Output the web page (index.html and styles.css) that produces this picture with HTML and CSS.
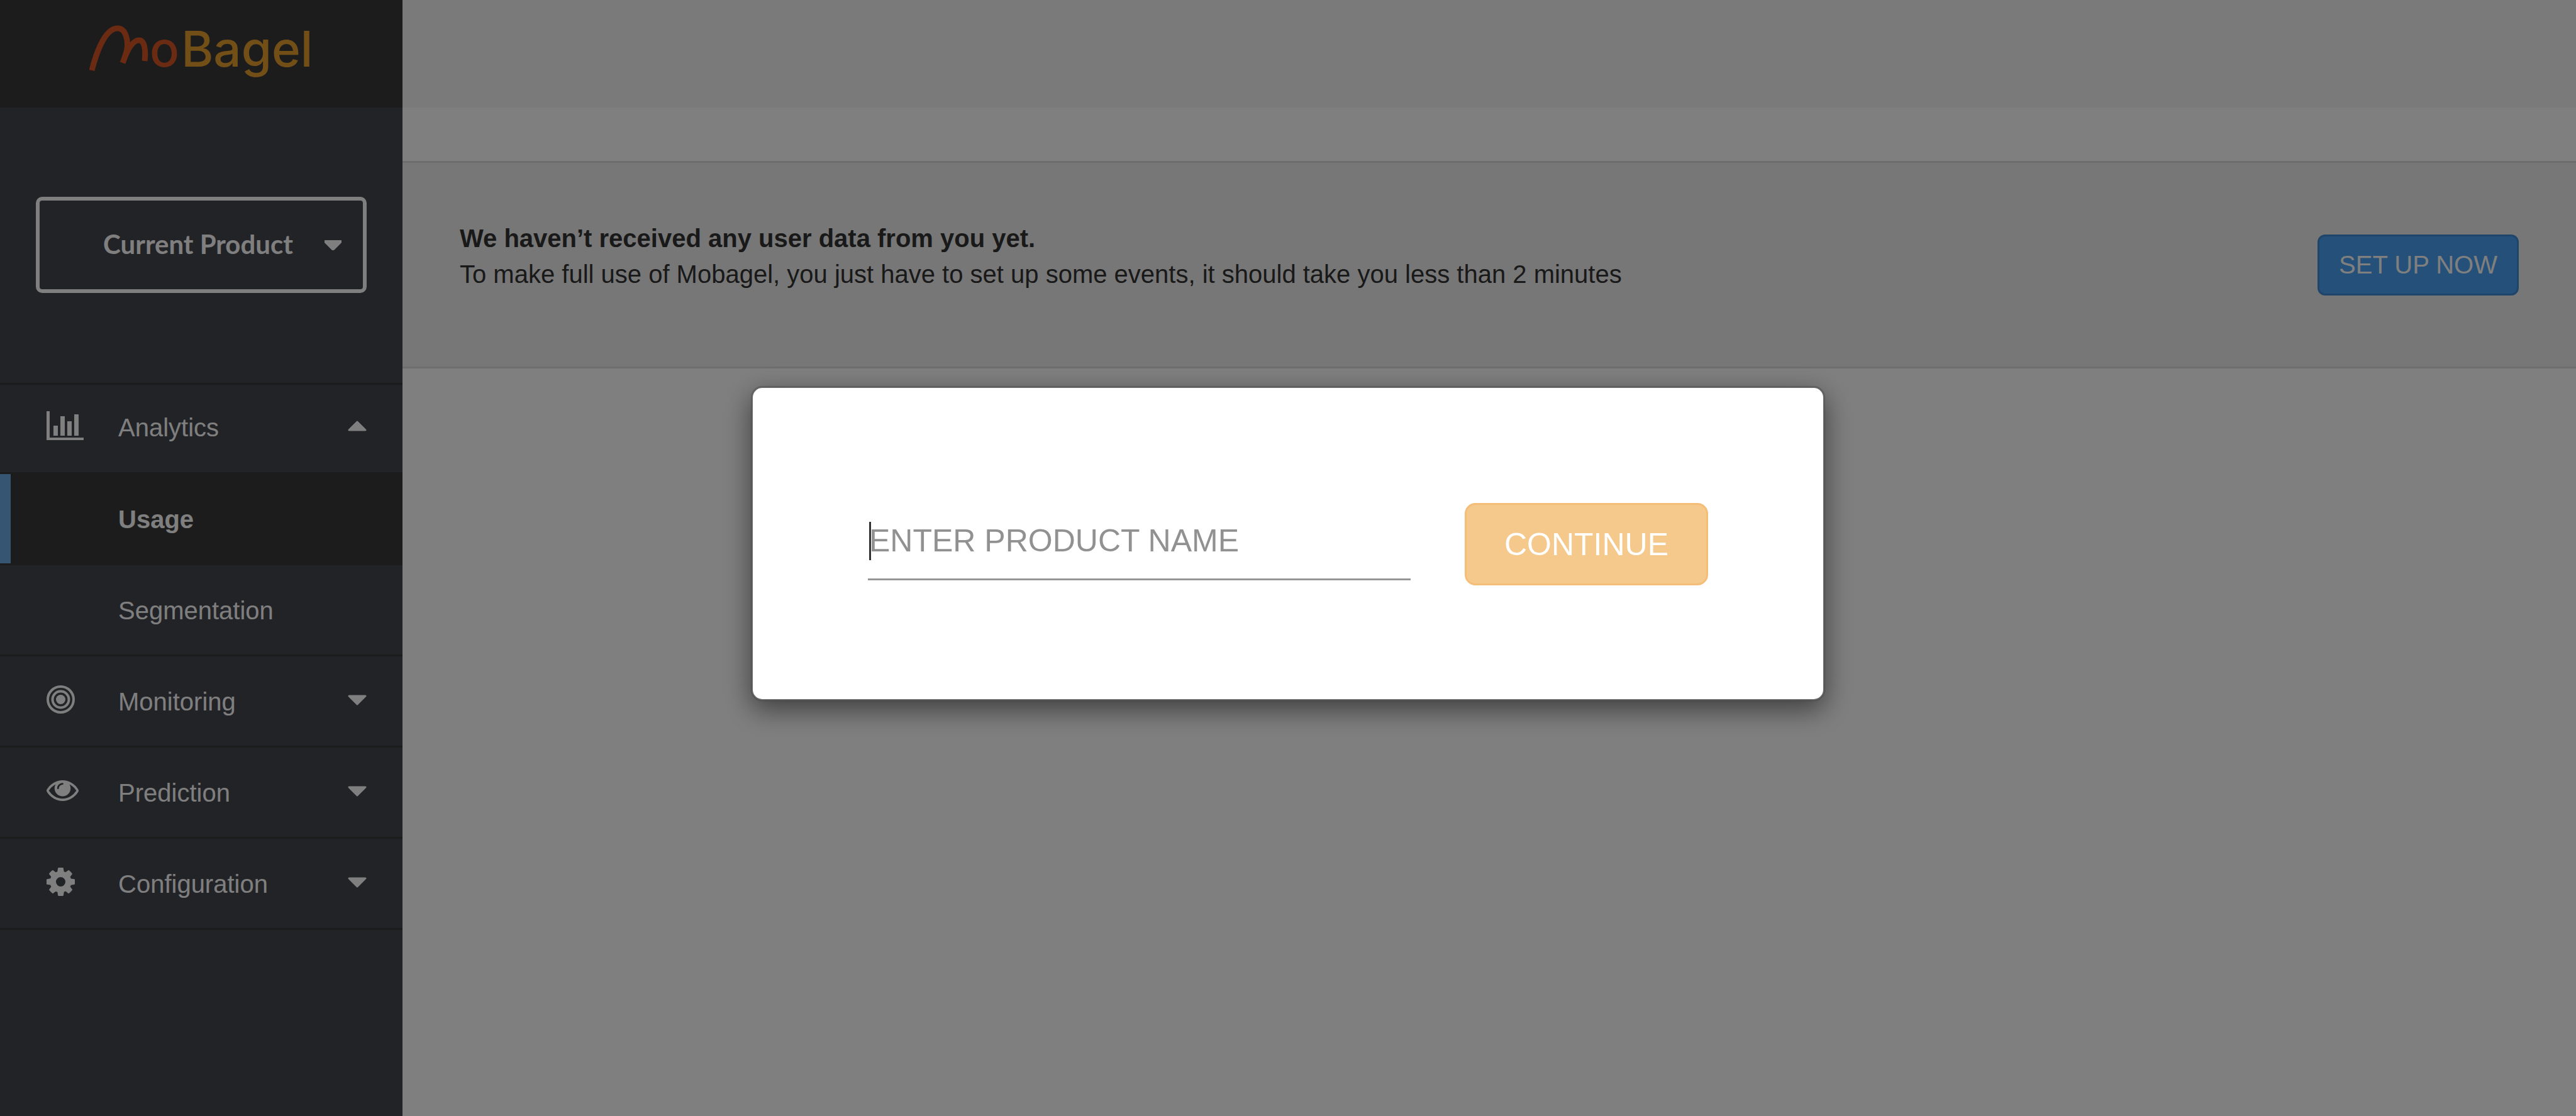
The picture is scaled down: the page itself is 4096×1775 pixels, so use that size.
FILE: index.html
```html
<!DOCTYPE html>
<html lang="en">
<head>
<meta charset="utf-8">
<title>MoBagel</title>
<link rel="stylesheet" href="styles.css">
</head>
<body>
<div class="app">
  <aside class="sidebar">
    <a class="brand" href="#" aria-label="MoBagel">
      <svg class="brand-mark" viewBox="0 0 94 74" aria-hidden="true">
        <path d="M4 72C9 52 23 5 45 5C58 5 62 24 60 38C58 48 55 55 53 60M53 60C58 46 67 24 79 24C88 24 90 40 88 57" fill="none" stroke="currentColor" stroke-width="9"/>
      </svg>
      <span class="brand-text"><span class="brand-o">o</span><span>Bagel</span></span>
    </a>
    <div class="product">
      <select class="product-select" aria-label="Product"><option>Current Product</option></select>
      <svg class="product-caret" viewBox="0 0 27 16" aria-hidden="true"><path d="M0 0H27V4L15 16H12L0 4Z"/></svg>
    </div>
    <nav class="nav">
      <a class="nav-item nav-item-first" href="#">
        <svg class="nav-icon" viewBox="0 0 59 46" width="59" height="46" aria-hidden="true"><path d="M0 0H5V42H59V46H0ZM11 23H18V39H11ZM22 8H29V39H22ZM33 16H40V39H33ZM44 5H51V39H44Z"/></svg>
        <span class="nav-label">Analytics</span>
        <svg class="nav-caret" viewBox="0 0 30 17" aria-hidden="true"><path d="M15 2L28 15H2Z"/></svg>
      </a>
      <a class="nav-item nav-item-active" href="#"><span class="nav-label">Usage</span></a>
      <a class="nav-item" href="#"><span class="nav-label">Segmentation</span></a>
      <a class="nav-item" href="#">
        <svg class="nav-icon" viewBox="0 0 45 45" width="45" height="45" aria-hidden="true"><g fill="none" stroke="currentColor" stroke-width="4"><circle cx="22.500" cy="22.500" r="20.500"/><circle cx="22.500" cy="22.500" r="13"/></g><circle cx="22.500" cy="22.500" r="7.500"/></svg>
        <span class="nav-label">Monitoring</span>
        <svg class="nav-caret" viewBox="0 0 30 17" aria-hidden="true"><path d="M15 15L28 2H2Z"/></svg>
      </a>
      <a class="nav-item" href="#">
        <svg class="nav-icon" viewBox="0 384 1792 1152" width="51" height="33" aria-hidden="true"><path d="M1664 960q-152-236-381-353 61 104 61 225 0 185-131.500 316.500t-316.500 131.500-316.500-131.500-131.500-316.500q0-121 61-225-229 117-381 353 133 205 333.500 326.500t434.500 121.500 434.500-121.500 333.500-326.500zm-720-384q0-20-14-34t-34-14q-125 0-214.500 89.500t-89.500 214.500q0 20 14 34t34 14 34-14 14-34q0-86 61-147t147-61q20 0 34-14t14-34zm848 384q0 34-20 69-140 230-376.500 368.500t-499.500 138.500-499.500-139-376.500-368q-20-35-20-69t20-69q140-229 376.500-368t499.500-139 499.500 139 376.500 368q20 35 20 69z"/></svg>
        <span class="nav-label">Prediction</span>
        <svg class="nav-caret" viewBox="0 0 30 17" aria-hidden="true"><path d="M15 15L28 2H2Z"/></svg>
      </a>
      <a class="nav-item" href="#">
        <svg class="nav-icon" viewBox="128 128 1536 1536" width="45" height="45" aria-hidden="true"><path d="M1152 896q0-106-75-181t-181-75-181 75-75 181 75 181 181 75 181-75 75-181zm512-109v222q0 12-8 23t-20 13l-185 28q-19 54-39 91 35 50 107 138 10 12 10 25t-9 23q-27 37-99 108t-94 71q-12 0-26-9l-138-108q-44 23-91 38-16 136-29 186-7 28-36 28h-222q-14 0-24.500-8.500t-11.500-21.500l-28-184q-49-16-90-37l-141 107q-10 9-25 9-14 0-25-11-126-114-165-168-7-10-7-23 0-12 8-23 15-21 51-66.500t54-70.500q-27-50-41-99l-183-27q-13-2-21-12.500t-8-23.500v-222q0-12 8-23t19-13l186-28q14-46 39-92-40-57-107-138-10-12-10-24 0-10 9-23 26-36 98.500-107.500t94.500-71.500q13 0 26 10l138 107q44-23 91-38 16-136 29-186 7-28 36-28h222q14 0 24.500 8.500t11.500 21.500l28 184q49 16 90 37l142-107q9-9 24-9 13 0 25 10 129 119 165 170 7 8 7 22 0 12-8 23-15 21-51 66.500t-54 70.500q26 50 41 98l183 28q13 2 21 12.500t8 23.500z"/></svg>
        <span class="nav-label">Configuration</span>
        <svg class="nav-caret" viewBox="0 0 30 17" aria-hidden="true"><path d="M15 15L28 2H2Z"/></svg>
      </a>
    </nav>
  </aside>
  <main class="main">
    <header class="topbar"></header>
    <section class="banner">
      <p class="banner-text"><strong>We haven’t received any user data from you yet.</strong><br>To make full use of Mobagel, you just have to set up some events, it should take you less than 2 minutes</p>
      <button class="btn btn-primary" type="button">SET UP NOW</button>
    </section>
  </main>
</div>
<div class="overlay">
  <form class="modal" role="dialog" aria-label="New product">
    <div class="field">
      <input class="field-input" type="text" placeholder="ENTER PRODUCT NAME" aria-label="Product name">
      <span class="field-cursor"></span>
    </div>
    <button class="btn btn-continue" type="button">CONTINUE</button>
  </form>
</div>
</body>
</html>
```
FILE: styles.css
```css
* {
  box-sizing: border-box;
}

body {
  margin: 0;
  background: #fff;
  color: #333;
  font-family: "Liberation Sans", Arial, sans-serif;
  font-size: 40px;
  line-height: 57px;
}

.app {
  display: flex;
  min-height: 100vh;
}

/* Sidebar */

.sidebar {
  flex: none;
  width: 640px;
  background: #44464e;
  color: #fff;
}

.brand {
  display: flex;
  align-items: flex-start;
  height: 171px;
  padding: 40px 0 0 142px;
  background: #383838;
  color: #d65626;
  text-decoration: none;
}

.brand-mark {
  flex: none;
  width: 94px;
  height: 74px;
}

.brand-text {
  display: flex;
  gap: 3px;
  padding-left: 2px;
  color: #e69e30;
  font-family: Inter, sans-serif;
  font-size: 78px;
  font-weight: 500;
  line-height: 76px;
}

.brand-o {
  color: #d65626;
}

.product {
  position: relative;
  margin: 142px 57px 143px;
}

.product-select {
  display: block;
  width: 100%;
  height: 153px;
  padding: 0 70px 4px 60px;
  border: 6px solid #fff;
  border-radius: 10px;
  background: transparent;
  color: #fff;
  font-family: Lato, sans-serif;
  font-size: 42px;
  font-weight: 700;
  text-align-last: center;
  appearance: none;
}

.product-caret {
  position: absolute;
  top: 69px;
  right: 40px;
  width: 27px;
  height: 16px;
  fill: #fff;
}

.nav {
  border-top: 3px solid #383838;
}

.nav-item {
  display: grid;
  grid-template-columns: 114px 1fr 30px;
  align-items: center;
  height: 145px;
  padding: 0 57px 0 74px;
  border-bottom: 3px solid #383838;
  color: #fff;
  text-decoration: none;
}

.nav-item-first {
  height: 142px;
  padding-bottom: 4px;
}

.nav-item-active {
  background: #383838;
  box-shadow: inset 17px 0 #6caae6;
  font-weight: 700;
}

.nav-icon {
  margin-bottom: 5px;
  fill: currentColor;
}

.nav-label {
  grid-column: 2;
  padding-top: 2px;
}

.nav-caret {
  width: 30px;
  height: 17px;
  margin-bottom: 4px;
  fill: #fff;
  stroke: #fff;
  stroke-width: 3px;
  stroke-linejoin: round;
}

/* Main area */

.main {
  flex: 1;
}

.topbar {
  height: 171px;
  margin-bottom: 85px;
  background: #f5f5f5;
}

.banner {
  display: flex;
  align-items: center;
  justify-content: space-between;
  height: 330px;
  padding: 0 91px;
  border: solid #dcdcdc;
  border-width: 3px 0;
  background: #eee;
}

.banner-text {
  margin: 0 0 26px;
}

.btn {
  border: 3px solid;
  color: #fff;
  font-family: inherit;
}

.btn-primary {
  height: 97px;
  padding: 0 31px;
  border-color: #408ad4;
  border-radius: 12px;
  background: #4aa0f2;
  font-size: 40px;
}

/* Product dialog */

.overlay {
  position: fixed;
  inset: 0;
  padding-top: 614px;
  background: rgba(0, 0, 0, 0.5);
}

.modal {
  display: flex;
  align-items: flex-start;
  gap: 86px;
  max-width: 1708px;
  margin: 0 auto;
  padding: 183px 183px 181px;
  border: 3px solid rgba(0, 0, 0, 0.2);
  border-radius: 18px;
  background: #fff;
  background-clip: padding-box;
  box-shadow: 0 14px 43px rgba(0, 0, 0, 0.5);
}

.field {
  position: relative;
  flex: 1;
}

.field-input {
  display: block;
  width: 100%;
  height: 123px;
  padding: 0 2px;
  border: 0;
  border-bottom: 3px solid #969696;
  background: transparent;
  color: #333;
  font-family: inherit;
  font-size: 50px;
}

.field-input::placeholder {
  color: #919191;
  opacity: 1;
}

.field-cursor {
  position: absolute;
  top: 30px;
  left: 2px;
  width: 3px;
  height: 61px;
  background: #333;
}

.btn-continue {
  height: 131px;
  padding: 0 60px;
  border-color: #f4be78;
  border-radius: 17px;
  background: #f5c88b;
  font-size: 50px;
}
```
